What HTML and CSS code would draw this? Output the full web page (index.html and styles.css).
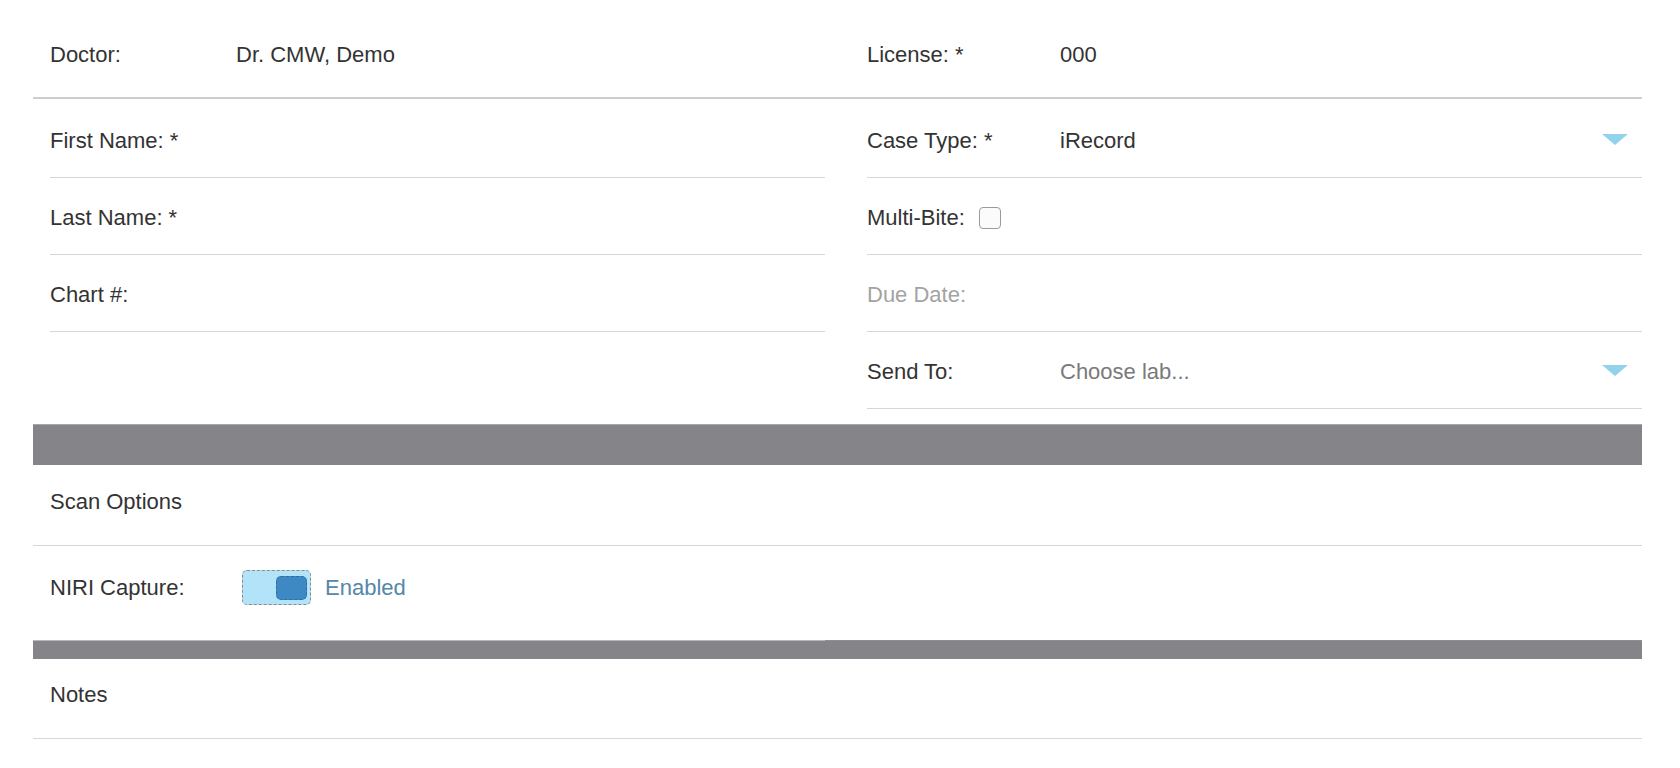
FILE: index.html
```html
<!DOCTYPE html>
<html lang="en">
<head>
<meta charset="utf-8">
<title>Case Form</title>
<link rel="stylesheet" href="styles.css">
</head>
<body>
<div class="form">
  <div class="grid top-row">
    <div class="field"><span class="label label-left">Doctor:</span><span class="value">Dr. CMW, Demo</span></div>
    <div class="field"><span class="label label-right">License: *</span><span class="value">000</span></div>
  </div>

  <div class="grid fields">
    <div class="col">
      <div class="row"><span class="label">First Name: *</span></div>
      <div class="row"><span class="label">Last Name: *</span></div>
      <div class="row"><span class="label">Chart #:</span></div>
    </div>
    <div class="col">
      <div class="row"><span class="label label-right">Case Type: *</span><span class="value grow">iRecord</span>
        <svg class="caret" width="26" height="11" viewBox="0 0 26 11"><polygon points="0,0 26,0 13,11" fill="#93d2ec"/></svg>
      </div>
      <div class="row"><span class="label">Multi-Bite:</span><span class="checkbox"></span></div>
      <div class="row"><span class="label muted">Due Date:</span></div>
      <div class="row"><span class="label label-right">Send To:</span><span class="value placeholder grow">Choose lab...</span>
        <svg class="caret" width="26" height="11" viewBox="0 0 26 11"><polygon points="0,0 26,0 13,11" fill="#93d2ec"/></svg>
      </div>
    </div>
  </div>

  <div class="band"></div>

  <div class="section-row scan"><span class="label">Scan Options</span></div>

  <div class="niri-row">
    <span class="label label-niri">NIRI Capture:</span>
    <span class="toggle"><span class="knob"></span></span>
    <span class="toggle-text">Enabled</span>
  </div>

  <div class="band thin"></div>

  <div class="section-row"><span class="label">Notes</span></div>
</div>
</body>
</html>
```

FILE: styles.css
```css
html, body {
  margin: 0;
  padding: 0;
  background: #ffffff;
}

body {
  font-family: "Liberation Sans", Arial, sans-serif;
  font-size: 22px;
  color: #333333;
}

.form {
  margin-left: 33px;
  width: 1609px;
  padding-top: 1px;
}

.grid {
  display: grid;
  grid-template-columns: 775px 775px;
  column-gap: 42px;
  padding-left: 17px;
}

.label,
.value {
  line-height: 24px;
  white-space: nowrap;
}

.label-left { width: 186px; }
.label-right { width: 193px; }
.label-niri { width: 192px; }

.muted { color: #a3a3a3; }
.placeholder { color: #7a7a7a; }
.grow { flex: 1; }

.top-row {
  height: 96px;
  border-bottom: 2px solid #cdcdcd;
}

.top-row .field {
  display: flex;
  align-items: flex-start;
  padding-top: 42px;
}

.fields {
  padding-top: 2px;
}

.col {
  display: flex;
  flex-direction: column;
}

.row {
  border-bottom: 1px solid #d6d6d6;
  display: flex;
  align-items: center;
  padding-top: 3px;
  box-sizing: border-box;
  height: 77px;
}

.caret {
  margin-right: 14px;
  margin-top: -3px;
}

.checkbox {
  width: 22px;
  height: 22px;
  border: 1px solid #9a9a9a;
  border-radius: 4px;
  margin-left: 14px;
  box-sizing: border-box;
  background: #fbfbfb;
}

.band {
  margin-top: 15px;
  height: 41px;
  background: #858489;
  border-top: 1px solid #a7a7aa;
  box-sizing: border-box;
}

.band.thin {
  margin-top: 0;
  height: 19px;
  border-top: none;
  background: linear-gradient(to right, #b8b8bb 0, #b8b8bb 792px, #8f8e93 792px) top left / 100% 1px no-repeat, #858489;
}

.section-row {
  height: 80px;
  box-sizing: border-box;
  padding: 23px 0 0 17px;
  border-bottom: 1px solid #d6d6d6;
}

.section-row.scan {
  height: 81px;
  padding-top: 24px;
}

.niri-row {
  height: 94px;
  box-sizing: border-box;
  display: flex;
  align-items: center;
  padding: 0 0 11px 17px;
}

.toggle {
  width: 69px;
  height: 35px;
  box-sizing: border-box;
  border: 1px dashed #8a8a8a;
  border-radius: 5px;
  background: #b2e3f8;
  display: flex;
  align-items: center;
  justify-content: flex-end;
  padding-right: 3px;
}

.knob {
  width: 31px;
  height: 24px;
  border-radius: 5px;
  background: #3e89c3;
  border: 1px dashed #2f6f9f;
  box-sizing: border-box;
}

.toggle-text {
  margin-left: 14px;
  color: #5487a8;
  line-height: 24px;
}
```
